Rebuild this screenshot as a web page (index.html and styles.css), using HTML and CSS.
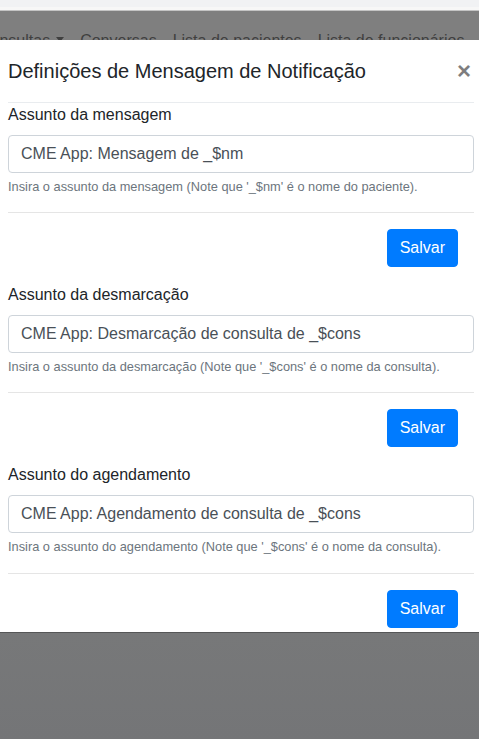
FILE: index.html
```html
<!DOCTYPE html>
<html lang="pt">
<head>
<meta charset="utf-8">
<title>Definições de Mensagem de Notificação</title>
<link rel="stylesheet" href="styles.css">
</head>
<body>
<div class="page">
  <div class="top-strip"></div>
  <div class="top-line"></div>
  <div class="nav-dim">
    <nav class="nav">
      <span class="nav-item dropdown">Consultas</span>
      <span class="nav-item">Conversas</span>
      <span class="nav-item">Lista de pacientes</span>
      <span class="nav-item">Lista de funcionários</span>
    </nav>
  </div>
  <div class="modal">
    <div class="modal-header">
      <h5 class="modal-title">Definições de Mensagem de Notificação</h5>
      <button class="close" type="button">×</button>
    </div>
    <div class="modal-body">
      <div class="section">
        <label class="label">Assunto da mensagem</label>
        <input class="input" type="text" value="CME App: Mensagem de _$nm">
        <small class="help">Insira o assunto da mensagem (Note que '_$nm' é o nome do paciente).</small>
        <hr class="divider">
        <div class="actions"><button class="btn" type="button">Salvar</button></div>
      </div>
      <div class="section">
        <label class="label">Assunto da desmarcação</label>
        <input class="input" type="text" value="CME App: Desmarcação de consulta de _$cons">
        <small class="help">Insira o assunto da desmarcação (Note que '_$cons' é o nome da consulta).</small>
        <hr class="divider">
        <div class="actions"><button class="btn" type="button">Salvar</button></div>
      </div>
      <div class="section">
        <label class="label">Assunto do agendamento</label>
        <input class="input" type="text" value="CME App: Agendamento de consulta de _$cons">
        <small class="help">Insira o assunto do agendamento (Note que '_$cons' é o nome da consulta).</small>
        <hr class="divider">
        <div class="actions"><button class="btn" type="button">Salvar</button></div>
      </div>
    </div>
  </div>
  <div class="backdrop"></div>
</div>
</body>
</html>
```

FILE: styles.css
```css
* { box-sizing: border-box; }
html, body { margin: 0; padding: 0; }
body {
  font-family: "Liberation Sans", Helvetica, Arial, sans-serif;
  font-size: 16px;
  line-height: 1.5;
  color: #212529;
}
.page {
  width: 479px;
  height: 739px;
  display: flex;
  flex-direction: column;
  overflow: hidden;
}
.top-strip {
  height: 7px;
  background: #f1f2f4;
}
.top-line {
  height: 4px;
  background: #f7f7f7;
  border-bottom: 1px solid #c4c4c4;
}
.nav-dim {
  height: 29px;
  background: #7f7f7f;
  overflow: hidden;
  padding-top: 18px;
}
.nav {
  display: flex;
  gap: 16px;
  margin-left: -21px;
  white-space: nowrap;
  color: #3f3f3f;
}
.dropdown::after {
  content: "";
  display: inline-block;
  margin-left: 6px;
  vertical-align: 4px;
  border-top: 5px solid #3f3f3f;
  border-left: 4.5px solid transparent;
  border-right: 4.5px solid transparent;
}
.modal {
  background: #fff;
  padding: 0 5px 0 8px;
  border-bottom: 1px solid #555657;
}
.modal-header {
  display: flex;
  align-items: center;
  justify-content: space-between;
  padding: 16px 0;
  border-bottom: 1px solid #e9ecef;
}
.modal-title {
  margin: 0;
  font-size: 20px;
  line-height: 30px;
  font-weight: 500;
  color: #212529;
}
.close {
  background: none;
  border: 0;
  padding: 0;
  margin-right: 3px;
  font-family: "Liberation Sans", Arial, sans-serif;
  font-size: 24px;
  line-height: 1;
  font-weight: 700;
  color: #000;
  opacity: .5;
}
.modal-body { padding: 0 0 4px; }
.section { margin-bottom: 16px; }
.section:last-child { margin-bottom: 0; }
.label {
  display: inline-block;
  margin-bottom: 8px;
  color: #212529;
}
.input {
  display: block;
  width: 100%;
  height: 38px;
  padding: 6px 12px;
  font-family: inherit;
  font-size: 16px;
  line-height: 1.5;
  color: #495057;
  background: #fff;
  border: 1px solid #ced4da;
  border-radius: 4px;
}
.help {
  display: block;
  margin-top: 4px;
  font-size: 12.8px;
  line-height: 1.5;
  color: #6c757d;
}
.divider {
  margin: 16px 0;
  border: 0;
  border-top: 1px solid rgba(0,0,0,.1);
}
.actions { display: flex; justify-content: flex-end; padding-right: 16px; }
.btn {
  font-family: inherit;
  font-size: 16px;
  line-height: 1.5;
  padding: 6px 12px;
  color: #fff;
  background: #007bff;
  border: 1px solid #007bff;
  border-radius: 4px;
}
.backdrop {
  flex: 1;
  background: linear-gradient(#777879, #747577);
}
```
